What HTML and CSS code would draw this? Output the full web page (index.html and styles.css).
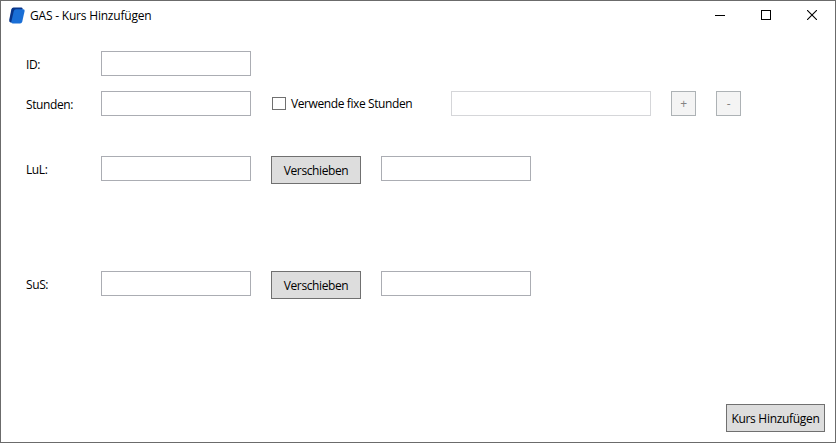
FILE: index.html
```html
<!DOCTYPE html>
<html lang="de">
<head>
<meta charset="utf-8">
<title>GAS - Kurs Hinzufügen</title>
<link rel="stylesheet" href="styles.css">
</head>
<body>
<div class="window">
  <header class="titlebar">
    <svg class="logo" width="18" height="18" viewBox="0 0 18 18">
      <path d="M5.500.500h8q1.300 0 1.200 1.500L9 14 3.500 15.500H2.600Q.9 15.300 1.200 13L3.300 2.500Q3.800.5 5.500.500z" fill="#08358a"/>
      <path d="M8 2.200h7.300q1.600 0 1.300 1.800L14.300 14.500q-.5 2-2.200 2H4.700q-1.700 0-1.300-2L5.800 4Q6.300 2.200 8 2.200z" fill="#1a6fd6"/>
    </svg>
    <h1 class="title">GAS - Kurs Hinzufügen</h1>
    <div class="controls">
      <svg width="10" height="10" viewBox="0 0 10 10" shape-rendering="crispEdges"><path d="M0 5.500h10" stroke="#000"/></svg>
      <svg width="10" height="10" viewBox="0 0 10 10" shape-rendering="crispEdges"><path d="M.5.500h9v9h-9z" fill="none" stroke="#000"/></svg>
      <svg width="10" height="10" viewBox="0 0 10 10"><path d="M0 0l10 10M10 0L0 10" stroke="#000" stroke-width="1.100"/></svg>
    </div>
  </header>
  <form class="form">
    <div class="row">
      <label class="label" for="id">ID:</label>
      <input class="field" id="id">
    </div>
    <div class="row row-hours">
      <label class="label" for="hours">Stunden:</label>
      <input class="field" id="hours">
      <label class="check"><input class="box" type="checkbox"><span class="check-text">Verwende fixe Stunden</span></label>
      <input class="field wide" disabled>
      <button class="btn small" type="button" disabled>+</button>
      <button class="btn small" type="button" disabled>-</button>
    </div>
    <div class="row row-teachers">
      <label class="label" for="lul">LuL:</label>
      <input class="field" id="lul">
      <button class="btn move" type="button"><span class="move-text">Verschieben</span></button>
      <input class="field">
    </div>
    <div class="row row-students">
      <label class="label" for="sus">SuS:</label>
      <input class="field" id="sus">
      <button class="btn move" type="button"><span class="move-text">Verschieben</span></button>
      <input class="field">
    </div>
    <button class="btn submit" type="button"><span class="submit-text">Kurs Hinzufügen</span></button>
  </form>
</div>
</body>
</html>
```
FILE: styles.css
```css
* { box-sizing: border-box; }
body {
  margin: 0;
  font: 12px/16px "Open Sans", "Noto Sans", sans-serif;
  letter-spacing: -0.4px;
  color: #000;
}
.window {
  display: flex;
  flex-direction: column;
  width: 836px;
  height: 443px;
  border: 1px solid #6b6b6b;
  background: #fff;
}
.titlebar {
  display: flex;
  align-items: center;
  height: 30px;
  padding: 0 18px 0 7px;
}
.logo { margin: -1px 4px 0 0; }
.title { margin: 0; font-size: 12px; font-weight: 400; letter-spacing: -0.2px; }
.controls { display: flex; gap: 36px; margin-left: auto; margin-top: -2px; }
.form {
  display: flex;
  flex-direction: column;
  flex: 1;
  padding: 20px 10px 10px 25px;
}
.row { display: flex; align-items: flex-start; gap: 20px; }
.row-hours { margin-top: 15px; }
.row-teachers { margin-top: 40px; }
.row-students { margin-top: 87px; }
.label { width: 75px; margin-right: -20px; padding-top: 6px; }
.field {
  width: 150px;
  height: 25px;
  margin: 0;
  padding: 0 4px;
  border: 1px solid #abadb3;
  border-radius: 0;
  background: #fff;
  font: inherit;
}
.field.wide { width: 200px; border-color: #d5d6d9; }
.check {
  display: flex;
  align-items: center;
  gap: 5px;
  width: 160px;
  height: 25px;
  padding-left: 1px;
}
.box {
  appearance: none;
  width: 14px;
  height: 13px;
  margin: 0;
  border: 1px solid #707070;
  background: #fff;
}
.btn {
  display: flex;
  align-items: center;
  justify-content: center;
  height: 28px;
  margin: 0;
  padding: 0;
  border: 1px solid #707070;
  border-radius: 0;
  background: #ddd;
  color: #000;
  font: inherit;
  letter-spacing: inherit;
}
.move { width: 90px; }
.move-text { padding-top: 2px; }
.small {
  width: 25px;
  height: 25px;
  border-color: #adb2b5;
  background: #f4f4f4;
  color: #838383;
}
.submit { width: 99px; margin-top: auto; align-self: flex-end; letter-spacing: -0.3px; }
.submit-text { padding-top: 2px; white-space: nowrap; }
```
